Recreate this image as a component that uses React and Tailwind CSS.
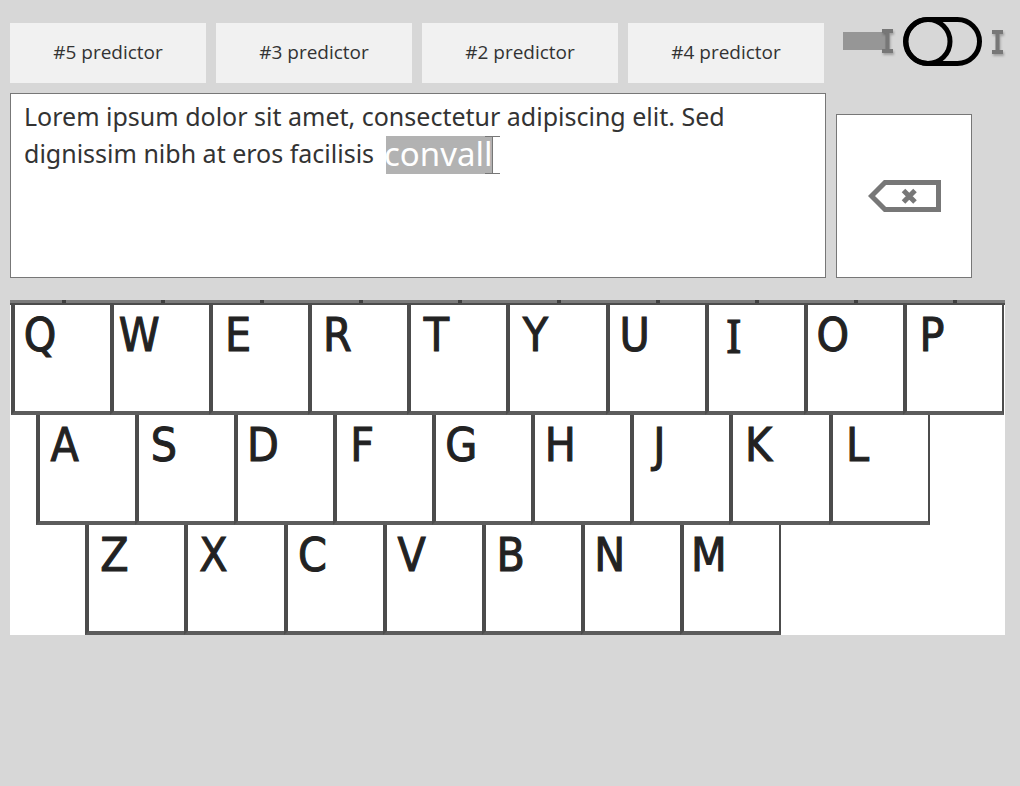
import React, { useState } from "react";

const predictors = ["#5 predictor", "#3 predictor", "#2 predictor", "#4 predictor"];

const rows = [
  { letters: "QWERTYUIOP", first: "col-start-1" },
  { letters: "ASDFGHJKL", first: "col-start-2" },
  { letters: "ZXCVBNM", first: "col-start-4" },
];

function Key({ letter, first, last }) {
  return (
    <button
      type="button"
      className={`col-span-4 flex h-[110px] items-start border-b-4 border-l-4 border-b-[#5c5c5c] border-l-[#4c4c4c] bg-white ${first} ${
        last ? "-mr-0.5 border-r-2 border-r-[#4c4c4c]" : ""
      }`}
    >
      <span
        className={`w-[50px] pt-0.5 text-center text-[46px] leading-[56px] text-[#222] [-webkit-text-stroke:1px_#222] ${
          letter === "I"
            ? "font-['Noto_Sans',sans-serif]"
            : "font-['DejaVu_Sans_Condensed','DejaVu_Sans',sans-serif]"
        }`}
      >
        {letter}
      </span>
    </button>
  );
}

function IBeam({ x, y }) {
  return (
    <path
      d={`M${x} ${y}h11v4h-3.5v16h3.5v4h-11v-4h3.5v-16h-3.5z`}
      fill="#777"
      className="drop-shadow-[1px_2px_1px_rgba(0,0,0,0.25)]"
    />
  );
}

export default function App() {
  const [on, setOn] = useState(false);
  return (
    <main className="min-h-screen bg-[#d7d7d7] pb-8 pl-2.5 pr-[15px] pt-[17px] font-['Open_Sans','Noto_Sans',sans-serif] text-[#333]">
      <div className="grid grid-cols-[1fr_169px] gap-2.5">
        <div className="flex flex-col gap-2.5 pt-1.5">
          <div className="grid grid-cols-4 gap-2.5 pr-0.5">
            {predictors.map((p) => (
              <button key={p} type="button" className="h-[60px] bg-[#f1f1f1] pb-0.5 text-[19px]">
                {p}
              </button>
            ))}
          </div>
          <div className="relative flex font-['Noto_Sans','Open_Sans',sans-serif]">
            <textarea
              aria-label="Message"
              spellCheck={false}
              defaultValue="Lorem ipsum dolor sit amet, consectetur adipiscing elit. Sed dignissim nibh at eros facilisis "
              className="h-[185px] w-full resize-none border border-[#777] bg-white px-[13px] py-1 text-[25px] leading-[37px] outline-none"
            />
            <span className="absolute left-[376px] top-[43px] h-[38px] w-[107px] -indent-0.5 whitespace-nowrap bg-[#b2b2b2] text-[33px] leading-[36px] text-white">
              convalli
            </span>
            <svg className="absolute left-[475px] top-[43px]" width="15" height="38" aria-hidden="true">
              <path d="M0 .5h15M0 37.5h15M7.5 0v38" stroke="#777" fill="none" />
            </svg>
          </div>
        </div>

        <div className="flex flex-col justify-between">
          <div className="flex items-start gap-2 pl-[7px]">
            <svg width="52" height="49" className="overflow-visible" aria-hidden="true">
              <rect x="0" y="15" width="44" height="18" fill="#969696" />
              <IBeam x={39} y={12} />
            </svg>
            <button type="button" role="switch" aria-checked={on} aria-label="Cursor mode" onClick={() => setOn(!on)}>
              <svg width="79" height="49" fill="none" stroke="#000" strokeWidth="5" className="block">
                <rect x="2.5" y="2.5" width="74" height="44" rx="22" />
                <circle cx={on ? 54 : 25} cy="24.5" r="22" />
              </svg>
            </button>
            <svg width="15" height="49" className="overflow-visible" aria-hidden="true">
              <IBeam x={2} y={13} />
            </svg>
          </div>
          <button
            type="button"
            aria-label="Backspace"
            className="flex h-[164px] w-[136px] items-center justify-center border border-[#777] bg-white"
          >
            <svg width="73" height="32" fill="none" stroke="#777" strokeWidth="5">
              <path d="M3.5 16L17 2.5H70.5V29.5H17z" />
              <path d="M35.500 10.500L47 22M47 10.500L35.500 22" />
            </svg>
          </button>
        </div>
      </div>

      <section aria-label="Keyboard" className="mt-[22px] bg-white">
        <div className="grid grid-cols-10 border-b-2 border-[#4c4c4c] bg-[#7b7b7b] pl-1">
          {rows[0].letters.split("").map((l) => (
            <i key={l} className="mx-auto h-[3px] w-1 bg-[#3f3f3f]" />
          ))}
        </div>
        <div className="grid grid-cols-[repeat(40,minmax(0,1fr))] pl-px pr-[3px]">
          {rows.map((row) =>
            row.letters.split("").map((l, i) => (
              <Key key={l} letter={l} first={i === 0 ? row.first : ""} last={i === row.letters.length - 1} />
            ))
          )}
        </div>
      </section>
    </main>
  );
}
